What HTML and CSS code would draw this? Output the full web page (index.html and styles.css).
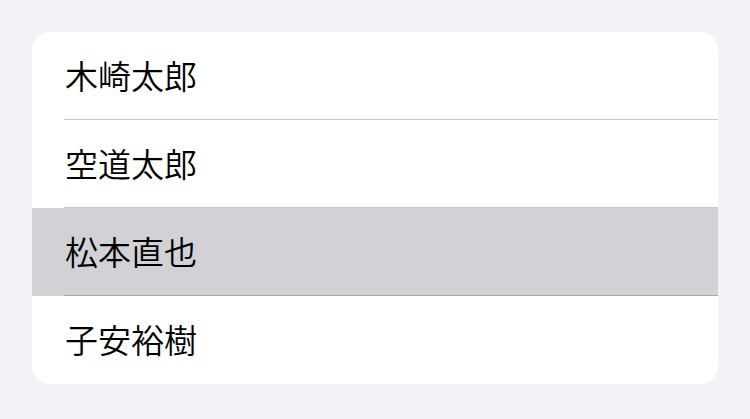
FILE: index.html
```html
<!DOCTYPE html>
<html lang="ja">
<head>
<meta charset="utf-8">
<link rel="stylesheet" href="styles.css">
</head>
<body>
<ul class="list">
  <li class="row"><span class="label">木崎太郎</span></li>
  <li class="row"><span class="label">空道太郎</span></li>
  <li class="row selected"><span class="label">松本直也</span></li>
  <li class="row last"><span class="label">子安裕樹</span></li>
</ul>
</body>
</html>
```
FILE: styles.css
```css
html, body {
  margin: 0;
  padding: 0;
  background: #f2f2f7;
}
body {
  padding: 32px;
  font-family: "Noto Sans CJK JP", "Noto Sans", sans-serif;
}
.list {
  list-style: none;
  margin: 0;
  padding: 0;
  width: 686px;
  background: #ffffff;
  border-radius: 18px;
  overflow: hidden;
}
.row {
  height: 88px;
  display: flex;
  align-items: center;
  padding-left: 33px;
  position: relative;
}
.row::after {
  content: "";
  position: absolute;
  left: 32px;
  right: 0;
  bottom: 0;
  height: 1px;
  background: #c6c6c8;
}
.row.last::after {
  display: none;
}
.row.selected {
  background: #d1d1d6;
}
.row.selected::after {
  background: #a8a8ad;
}
.label {
  font-size: 33px;
  font-weight: 350;
  line-height: 1;
  color: #000000;
  margin-top: -2px;
}
```
